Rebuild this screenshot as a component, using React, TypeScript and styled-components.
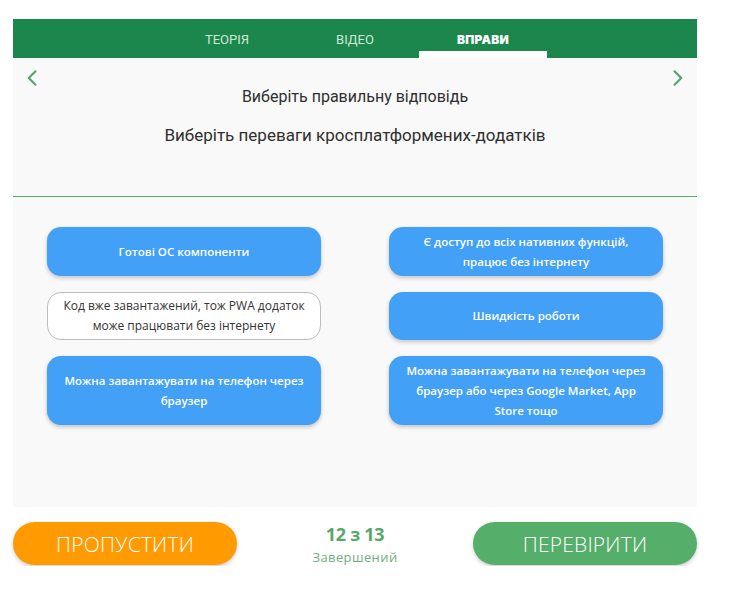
import React from "react";
import styled, { createGlobalStyle } from "styled-components";

const Global = createGlobalStyle`
  html, body { margin: 0; padding: 0; background: #ffffff; }
  body { font-family: "Open Sans", "Liberation Sans", sans-serif; }
  * { box-sizing: border-box; }
`;

const Page = styled.div`
  width: 684px;
  margin: 19px 0 0 13px;
  display: flex;
  flex-direction: column;
`;

const Panel = styled.div`
  background: #f9f9f9;
  display: flex;
  flex-direction: column;
  height: 488px;
`;

const TabBar = styled.nav`
  height: 39px;
  background: #1c874c;
  display: flex;
  justify-content: center;
`;

const Tab = styled.div<{ $active?: boolean }>`
  width: 128px;
  display: flex;
  align-items: center;
  justify-content: center;
  font-family: ${(p) => (p.$active ? '"Inter", sans-serif' : '"Roboto", sans-serif')};
  font-size: ${(p) => (p.$active ? "12px" : "13px")};
  font-weight: ${(p) => (p.$active ? 900 : 400)};
  color: ${(p) => (p.$active ? "#ffffff" : "#cfe8d4")};
  letter-spacing: ${(p) => (p.$active ? "0.2px" : "0")};
  border-bottom: 7px solid ${(p) => (p.$active ? "#ffffff" : "transparent")};
  padding-top: 8px;
`;

const Question = styled.div`
  height: 139px;
  border-bottom: 1px solid #5aaa6a;
  display: grid;
  grid-template-columns: 34px 1fr 34px;
`;

const ArrowBtn = styled.div<{ $right?: boolean }>`
  display: flex;
  justify-content: ${(p) => (p.$right ? "flex-end" : "flex-start")};
  padding-top: 12px;
  ${(p) => (p.$right ? "padding-right: 14px;" : "padding-left: 14px;")}
  svg { flex-shrink: 0; }
`;

const QText = styled.div`
  display: flex;
  flex-direction: column;
  align-items: center;
  font-family: "Roboto", sans-serif;
  color: #2f2f2f;
`;

const Instruction = styled.div`
  margin-top: 29px;
  font-size: 16px;
  line-height: 20px;
`;

const Prompt = styled.div`
  margin-top: 18px;
  font-size: 17px;
  line-height: 20px;
`;

const Answers = styled.div`
  display: grid;
  grid-template-columns: 274px 274px;
  column-gap: 68px;
  row-gap: 16px;
  padding: 30px 34px 0;
`;

const Answer = styled.button<{ $outline?: boolean }>`
  min-height: 48px;
  padding: ${(p) => (p.$outline ? "3px 14px" : "4.5px 14px")};
  border-radius: 14px;
  display: flex;
  align-items: center;
  justify-content: center;
  text-align: center;
  font-family: "Open Sans", sans-serif;
  font-size: ${(p) => (p.$outline ? "12px" : "11.5px")};
  line-height: 20px;
  font-weight: ${(p) => (p.$outline ? 500 : 600)};
  color: ${(p) => (p.$outline ? "#333333" : "#ffffff")};
  background: ${(p) => (p.$outline ? "#ffffff" : "#42a0f6")};
  border: ${(p) => (p.$outline ? "1px solid #bdbdbd" : "none")};
  box-shadow: ${(p) => (p.$outline ? "none" : "0 2px 4px rgba(0,0,0,0.22)")};
  cursor: pointer;
`;

const Footer = styled.div`
  margin-top: 15px;
  display: flex;
  justify-content: space-between;
  align-items: flex-start;
`;

const BigBtn = styled.button<{ $color: string }>`
  width: 224px;
  height: 43px;
  border: none;
  border-radius: 22px;
  background: ${(p) => p.$color};
  color: #ffffff;
  font-family: "Open Sans", sans-serif;
  font-weight: 300;
  font-size: 21px;
  letter-spacing: 0.2px;
  box-shadow: 0 2px 4px rgba(0,0,0,0.2);
  cursor: pointer;
`;

const Progress = styled.div`
  display: flex;
  flex-direction: column;
  align-items: center;
  padding-top: 1px;
  color: #56a868;
`;

const Count = styled.div`
  font-family: "Open Sans", sans-serif;
  font-weight: 700;
  font-size: 18px;
  line-height: 22px;
  letter-spacing: -0.3px;
`;

const Done = styled.div`
  margin-top: 3px;
  font-family: "Open Sans", sans-serif;
  font-size: 13px;
  letter-spacing: 0.4px;
  color: #6fae7e;
`;

const Chevron = ({ dir }: { dir: "left" | "right" }) => (
  <svg width="10" height="16" viewBox="0 0 10 16" fill="none">
    <path
      d={dir === "left" ? "M8.5 1.2 L1.7 8 L8.5 14.8" : "M1.5 1.2 L8.3 8 L1.5 14.8"}
      stroke="#4fa566"
      strokeWidth="2"
      strokeLinecap="round"
      strokeLinejoin="round"
    />
  </svg>
);

const answers: { text: string; outline?: boolean }[] = [
  { text: "Готові ОС компоненти" },
  { text: "Є доступ до всіх нативних функцій, працює без інтернету" },
  { text: "Код вже завантажений, тож PWA додаток може працювати без інтернету", outline: true },
  { text: "Швидкість роботи" },
  { text: "Можна завантажувати на телефон через браузер" },
  { text: "Можна завантажувати на телефон через браузер або через Google Market, App Store тощо" },
];

export default function App() {
  return (
    <>
      <Global />
      <Page>
        <Panel>
          <TabBar>
            <Tab>ТЕОРІЯ</Tab>
            <Tab>ВІДЕО</Tab>
            <Tab $active>ВПРАВИ</Tab>
          </TabBar>
          <Question>
            <ArrowBtn>
              <Chevron dir="left" />
            </ArrowBtn>
            <QText>
              <Instruction>Виберіть правильну відповідь</Instruction>
              <Prompt>Виберіть переваги кросплатформених-додатків</Prompt>
            </QText>
            <ArrowBtn $right>
              <Chevron dir="right" />
            </ArrowBtn>
          </Question>
          <Answers>
            {answers.map((a, i) => (
              <Answer key={i} $outline={a.outline}>
                {a.text}
              </Answer>
            ))}
          </Answers>
        </Panel>
        <Footer>
          <BigBtn $color="#ff9a00">ПРОПУСТИТИ</BigBtn>
          <Progress>
            <Count>12 з 13</Count>
            <Done>Завершений</Done>
          </Progress>
          <BigBtn $color="#55ae69">ПЕРЕВІРИТИ</BigBtn>
        </Footer>
      </Page>
    </>
  );
}
